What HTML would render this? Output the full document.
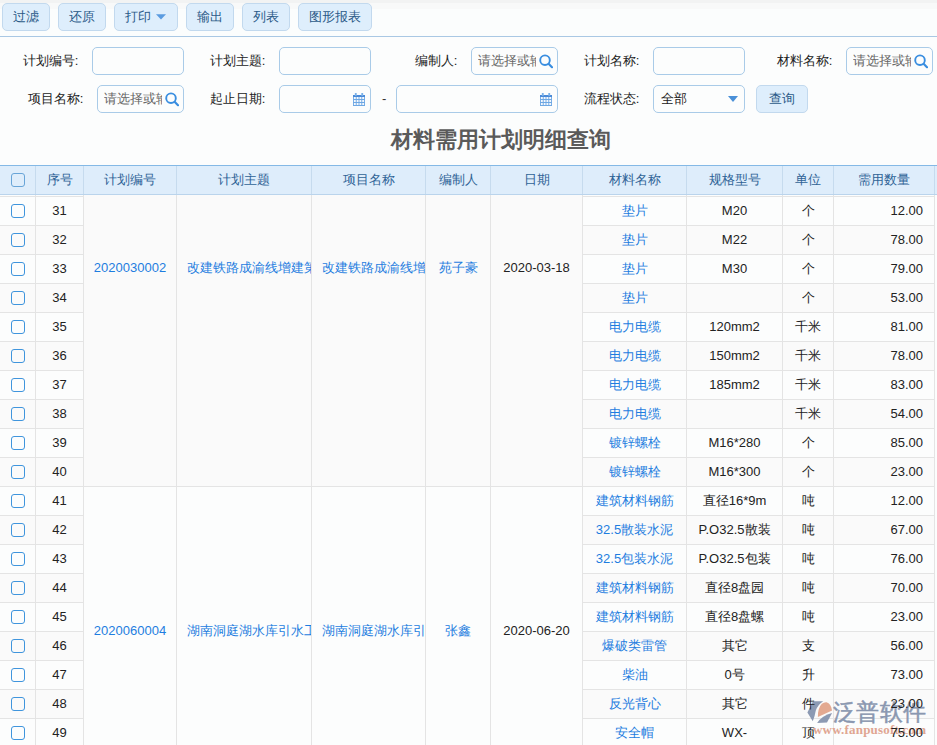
<!DOCTYPE html><html><head><meta charset="utf-8"><style>
*{box-sizing:border-box}
html,body{margin:0;padding:0;width:937px;height:745px;overflow:hidden;background:#fcfdfd;font-family:"Liberation Sans",sans-serif;font-size:13px;color:#333}
.a{position:absolute}
.btn{position:absolute;top:3px;height:28px;border:1px solid #c2d9ee;border-radius:5px;background:#deeefc;color:#2b5a88;line-height:25px;text-align:center;white-space:nowrap}
.lbl{position:absolute;text-align:right;white-space:nowrap;line-height:16px;color:#222}
.inp{position:absolute;height:28px;border:1px solid #a9cbe8;border-radius:5px;background:#fcfdfd;overflow:hidden}
.ph{position:absolute;left:6px;top:4px;line-height:17px;color:#666;white-space:nowrap;overflow:hidden}
.hc{position:absolute;top:166px;height:28px;line-height:28px;text-align:center;color:#2f6396;white-space:nowrap}
.vl{position:absolute;width:1px}
.hl{position:absolute;height:1px}
.c{position:absolute;height:28px;line-height:28px;white-space:nowrap;overflow:hidden}
.lk{color:#1e7de0}
.cb{position:absolute;left:11px;width:14px;height:14px;border:1.75px solid #3f95dd;border-radius:3px;background:transparent}
</style></head><body>

<div class="a" style="left:0;top:0;width:937px;height:36px;background:linear-gradient(#f2f3f3 0px,#f2f3f3 3px,#f8f9f9 3px,#f8f9f9 9px,#fbfdfd 9px,#fbfdfd 36px)"></div>
<div class="a" style="left:0;top:36px;width:937px;height:1px;background:#a9c8e4"></div>
<div class="btn" style="left:2px;width:48px">过滤</div>
<div class="btn" style="left:58px;width:48px">还原</div>
<div class="btn" style="left:114px;width:64px;text-align:left;padding-left:10px">打印<svg class="a" style="left:41px;top:10px" width="10" height="6" viewBox="0 0 10 6"><path d="M0 0.3H10L5 5.6Z" fill="#5a9be0"/></svg></div>
<div class="btn" style="left:186px;width:48px">输出</div>
<div class="btn" style="left:242px;width:48px">列表</div>
<div class="btn" style="left:298px;width:74px">图形报表</div>
<div class="lbl" style="left:-41.599999999999994px;width:120px;top:52.8px">计划编号:</div>
<div class="inp" style="left:92px;top:47px;width:92px"></div>
<div class="lbl" style="left:145.4px;width:120px;top:52.8px">计划主题:</div>
<div class="inp" style="left:279px;top:47px;width:92px"></div>
<div class="lbl" style="left:337.4px;width:120px;top:52.8px">编制人:</div>
<div class="inp" style="left:471px;top:47px;width:87px"><div class="ph" style="width:58px">请选择或输入</div><svg class="a" style="right:4px;top:6px" width="16" height="16" viewBox="0 0 16 16"><circle cx="8" cy="6.2" r="4.8" fill="none" stroke="#3a8ee0" stroke-width="1.9"/><path d="M11.6 9.8L15 13.2" stroke="#3a8ee0" stroke-width="2.2" stroke-linecap="round"/></svg></div>
<div class="lbl" style="left:519.4px;width:120px;top:52.8px">计划名称:</div>
<div class="inp" style="left:653px;top:47px;width:92px"></div>
<div class="lbl" style="left:712.4px;width:120px;top:52.8px">材料名称:</div>
<div class="inp" style="left:846px;top:47px;width:87px"><div class="ph" style="width:58px">请选择或输入</div><svg class="a" style="right:4px;top:6px" width="16" height="16" viewBox="0 0 16 16"><circle cx="8" cy="6.2" r="4.8" fill="none" stroke="#3a8ee0" stroke-width="1.9"/><path d="M11.6 9.8L15 13.2" stroke="#3a8ee0" stroke-width="2.2" stroke-linecap="round"/></svg></div>
<div class="lbl" style="left:-36.599999999999994px;width:120px;top:90.8px">项目名称:</div>
<div class="inp" style="left:97px;top:85px;width:87px"><div class="ph" style="width:58px">请选择或输入</div><svg class="a" style="right:4px;top:6px" width="16" height="16" viewBox="0 0 16 16"><circle cx="8" cy="6.2" r="4.8" fill="none" stroke="#3a8ee0" stroke-width="1.9"/><path d="M11.6 9.8L15 13.2" stroke="#3a8ee0" stroke-width="2.2" stroke-linecap="round"/></svg></div>
<div class="lbl" style="left:145.4px;width:120px;top:90.8px">起止日期:</div>
<div class="inp" style="left:279px;top:85px;width:92px"><svg class="a" style="right:5px;top:7px" width="12" height="13" viewBox="0 0 13 13" preserveAspectRatio="none"><rect x="0" y="4" width="13" height="9" fill="#6ea8e4"/><g fill="#f4f8fd"><rect x="1" y="4" width="2" height="2"/><rect x="4" y="4" width="2" height="2"/><rect x="7" y="4" width="2" height="2"/><rect x="10" y="4" width="2" height="2"/><rect x="1" y="7" width="2" height="2"/><rect x="4" y="7" width="2" height="2"/><rect x="7" y="7" width="2" height="2"/><rect x="10" y="7" width="2" height="2"/><rect x="1" y="10" width="2" height="2"/><rect x="4" y="10" width="2" height="2"/><rect x="7" y="10" width="2" height="2"/><rect x="10" y="10" width="2" height="2"/></g><rect x="0" y="2" width="13" height="2" fill="#4a8ad8"/><rect x="2" y="0" width="2" height="3" fill="#79b0e8"/><rect x="9" y="0" width="2" height="3" fill="#79b0e8"/></svg></div>
<div class="a" style="left:382px;top:91px;line-height:16px">-</div>
<div class="inp" style="left:396px;top:85px;width:162px"><svg class="a" style="right:5px;top:7px" width="12" height="13" viewBox="0 0 13 13" preserveAspectRatio="none"><rect x="0" y="4" width="13" height="9" fill="#6ea8e4"/><g fill="#f4f8fd"><rect x="1" y="4" width="2" height="2"/><rect x="4" y="4" width="2" height="2"/><rect x="7" y="4" width="2" height="2"/><rect x="10" y="4" width="2" height="2"/><rect x="1" y="7" width="2" height="2"/><rect x="4" y="7" width="2" height="2"/><rect x="7" y="7" width="2" height="2"/><rect x="10" y="7" width="2" height="2"/><rect x="1" y="10" width="2" height="2"/><rect x="4" y="10" width="2" height="2"/><rect x="7" y="10" width="2" height="2"/><rect x="10" y="10" width="2" height="2"/></g><rect x="0" y="2" width="13" height="2" fill="#4a8ad8"/><rect x="2" y="0" width="2" height="3" fill="#79b0e8"/><rect x="9" y="0" width="2" height="3" fill="#79b0e8"/></svg></div>
<div class="lbl" style="left:519.4px;width:120px;top:90.8px">流程状态:</div>
<div class="inp" style="left:653px;top:85px;width:92px"><div class="ph" style="color:#222;left:7px">全部</div><svg class="a" style="right:6px;top:10px" width="10" height="6" viewBox="0 0 10 6"><path d="M0 0H10L5 6Z" fill="#4a90d8"/></svg></div>
<div class="btn" style="left:756px;top:85px;width:52px">查询</div>
<div class="a" style="left:391px;top:127px;font-size:22px;font-weight:bold;color:#5a5a5a;line-height:26px;white-space:nowrap">材料需用计划明细查询</div>
<div class="a" style="left:0;top:165px;width:937px;height:30px;background:#deedfb"></div>
<div class="hl" style="left:0;top:165px;width:937px;background:#84b9e6"></div>
<div class="hl" style="left:0;top:194px;width:937px;background:#bad4ec"></div>
<div class="vl" style="left:35px;top:166px;height:28px;background:#c6dbee"></div>
<div class="vl" style="left:83px;top:166px;height:28px;background:#c6dbee"></div>
<div class="vl" style="left:176px;top:166px;height:28px;background:#c6dbee"></div>
<div class="vl" style="left:311px;top:166px;height:28px;background:#c6dbee"></div>
<div class="vl" style="left:425px;top:166px;height:28px;background:#c6dbee"></div>
<div class="vl" style="left:490px;top:166px;height:28px;background:#c6dbee"></div>
<div class="vl" style="left:582px;top:166px;height:28px;background:#c6dbee"></div>
<div class="vl" style="left:686px;top:166px;height:28px;background:#c6dbee"></div>
<div class="vl" style="left:782px;top:166px;height:28px;background:#c6dbee"></div>
<div class="vl" style="left:833px;top:166px;height:28px;background:#c6dbee"></div>
<div class="vl" style="left:934px;top:166px;height:28px;background:#c6dbee"></div>
<div class="cb" style="top:173px;border-color:#68a5d8"></div>
<div class="hc" style="left:36px;width:47px">序号</div>
<div class="hc" style="left:84px;width:92px">计划编号</div>
<div class="hc" style="left:177px;width:134px">计划主题</div>
<div class="hc" style="left:312px;width:113px">项目名称</div>
<div class="hc" style="left:426px;width:64px">编制人</div>
<div class="hc" style="left:491px;width:91px">日期</div>
<div class="hc" style="left:583px;width:103px">材料名称</div>
<div class="hc" style="left:687px;width:95px">规格型号</div>
<div class="hc" style="left:783px;width:50px">单位</div>
<div class="hc" style="left:834px;width:100px">需用数量</div>
<div class="a" style="left:0;top:225px;width:83px;height:29px;background:#fafafa"></div>
<div class="a" style="left:582px;top:225px;width:352px;height:29px;background:#fafafa"></div>
<div class="a" style="left:0;top:283px;width:83px;height:29px;background:#fafafa"></div>
<div class="a" style="left:582px;top:283px;width:352px;height:29px;background:#fafafa"></div>
<div class="a" style="left:0;top:341px;width:83px;height:29px;background:#fafafa"></div>
<div class="a" style="left:582px;top:341px;width:352px;height:29px;background:#fafafa"></div>
<div class="a" style="left:0;top:399px;width:83px;height:29px;background:#fafafa"></div>
<div class="a" style="left:582px;top:399px;width:352px;height:29px;background:#fafafa"></div>
<div class="a" style="left:0;top:457px;width:83px;height:29px;background:#fafafa"></div>
<div class="a" style="left:582px;top:457px;width:352px;height:29px;background:#fafafa"></div>
<div class="a" style="left:0;top:515px;width:83px;height:29px;background:#fafafa"></div>
<div class="a" style="left:582px;top:515px;width:352px;height:29px;background:#fafafa"></div>
<div class="a" style="left:0;top:573px;width:83px;height:29px;background:#fafafa"></div>
<div class="a" style="left:582px;top:573px;width:352px;height:29px;background:#fafafa"></div>
<div class="a" style="left:0;top:631px;width:83px;height:29px;background:#fafafa"></div>
<div class="a" style="left:582px;top:631px;width:352px;height:29px;background:#fafafa"></div>
<div class="a" style="left:0;top:689px;width:83px;height:29px;background:#fafafa"></div>
<div class="a" style="left:582px;top:689px;width:352px;height:29px;background:#fafafa"></div>
<div class="a" style="left:83px;top:195px;width:499px;height:291px;background:#fafafa"></div>
<div class="hl" style="left:0;top:196px;width:83px;background:#e4e4e4"></div>
<div class="hl" style="left:582px;top:196px;width:352px;background:#e4e4e4"></div>
<div class="hl" style="left:0;top:225px;width:83px;background:#e4e4e4"></div>
<div class="hl" style="left:582px;top:225px;width:352px;background:#e4e4e4"></div>
<div class="hl" style="left:0;top:254px;width:83px;background:#e4e4e4"></div>
<div class="hl" style="left:582px;top:254px;width:352px;background:#e4e4e4"></div>
<div class="hl" style="left:0;top:283px;width:83px;background:#e4e4e4"></div>
<div class="hl" style="left:582px;top:283px;width:352px;background:#e4e4e4"></div>
<div class="hl" style="left:0;top:312px;width:83px;background:#e4e4e4"></div>
<div class="hl" style="left:582px;top:312px;width:352px;background:#e4e4e4"></div>
<div class="hl" style="left:0;top:341px;width:83px;background:#e4e4e4"></div>
<div class="hl" style="left:582px;top:341px;width:352px;background:#e4e4e4"></div>
<div class="hl" style="left:0;top:370px;width:83px;background:#e4e4e4"></div>
<div class="hl" style="left:582px;top:370px;width:352px;background:#e4e4e4"></div>
<div class="hl" style="left:0;top:399px;width:83px;background:#e4e4e4"></div>
<div class="hl" style="left:582px;top:399px;width:352px;background:#e4e4e4"></div>
<div class="hl" style="left:0;top:428px;width:83px;background:#e4e4e4"></div>
<div class="hl" style="left:582px;top:428px;width:352px;background:#e4e4e4"></div>
<div class="hl" style="left:0;top:457px;width:83px;background:#e4e4e4"></div>
<div class="hl" style="left:582px;top:457px;width:352px;background:#e4e4e4"></div>
<div class="hl" style="left:0;top:486px;width:83px;background:#e4e4e4"></div>
<div class="hl" style="left:582px;top:486px;width:352px;background:#e4e4e4"></div>
<div class="hl" style="left:83px;top:486px;width:499px;background:#e4e4e4"></div>
<div class="hl" style="left:0;top:515px;width:83px;background:#e4e4e4"></div>
<div class="hl" style="left:582px;top:515px;width:352px;background:#e4e4e4"></div>
<div class="hl" style="left:0;top:544px;width:83px;background:#e4e4e4"></div>
<div class="hl" style="left:582px;top:544px;width:352px;background:#e4e4e4"></div>
<div class="hl" style="left:0;top:573px;width:83px;background:#e4e4e4"></div>
<div class="hl" style="left:582px;top:573px;width:352px;background:#e4e4e4"></div>
<div class="hl" style="left:0;top:602px;width:83px;background:#e4e4e4"></div>
<div class="hl" style="left:582px;top:602px;width:352px;background:#e4e4e4"></div>
<div class="hl" style="left:0;top:631px;width:83px;background:#e4e4e4"></div>
<div class="hl" style="left:582px;top:631px;width:352px;background:#e4e4e4"></div>
<div class="hl" style="left:0;top:660px;width:83px;background:#e4e4e4"></div>
<div class="hl" style="left:582px;top:660px;width:352px;background:#e4e4e4"></div>
<div class="hl" style="left:0;top:689px;width:83px;background:#e4e4e4"></div>
<div class="hl" style="left:582px;top:689px;width:352px;background:#e4e4e4"></div>
<div class="hl" style="left:0;top:718px;width:83px;background:#e4e4e4"></div>
<div class="hl" style="left:582px;top:718px;width:352px;background:#e4e4e4"></div>
<div class="vl" style="left:35px;top:195px;height:550px;background:#e4e4e4"></div>
<div class="vl" style="left:83px;top:195px;height:550px;background:#e4e4e4"></div>
<div class="vl" style="left:176px;top:195px;height:550px;background:#e4e4e4"></div>
<div class="vl" style="left:311px;top:195px;height:550px;background:#e4e4e4"></div>
<div class="vl" style="left:425px;top:195px;height:550px;background:#e4e4e4"></div>
<div class="vl" style="left:490px;top:195px;height:550px;background:#e4e4e4"></div>
<div class="vl" style="left:582px;top:195px;height:550px;background:#e4e4e4"></div>
<div class="vl" style="left:686px;top:195px;height:550px;background:#e4e4e4"></div>
<div class="vl" style="left:782px;top:195px;height:550px;background:#e4e4e4"></div>
<div class="vl" style="left:833px;top:195px;height:550px;background:#e4e4e4"></div>
<div class="vl" style="left:934px;top:195px;height:550px;background:#e4e4e4"></div>
<svg class="a" style="left:800px;top:692px;opacity:0.95" width="45" height="38" viewBox="0 0 45 38">
<path d="M13 9.2 L23.2 9.2 Q18 12.5 15.8 18.4 Q14.8 24 12.8 29.3 L7.4 20.4 Z" fill="#8795b0"/>
<path d="M17.9 25 Q17.6 16 21.9 11.7 Q24 10 26.5 10.2 Q31 11.5 32.1 18.4 Z" fill="#e2a58c"/>
<path d="M17.1 30.9 Q22 23.5 32.1 20.9 L27 30.6 Z" fill="#8795b0"/>
</svg>
<div class="a" style="left:833px;top:698px;font-size:23px;line-height:28px;color:#8a97b0;white-space:nowrap;-webkit-text-stroke:0.5px #8a97b0;letter-spacing:0.4px">泛普软件</div>
<div class="a" style="left:813px;top:722px;font-family:'Liberation Serif',serif;font-size:13px;font-weight:bold;line-height:15px;color:#e0a692;white-space:nowrap;letter-spacing:0.2px">www.fanpusoft.com</div>
<div class="cb" style="top:204px"></div>
<div class="c" style="left:36px;width:47px;top:197px;text-align:center;color:#222">31</div>
<div class="c lk" style="left:583px;width:103px;top:197px;text-align:center">垫片</div>
<div class="c" style="left:687px;width:95px;top:197px;text-align:center;color:#222">M20</div>
<div class="c" style="left:783px;width:50px;top:197px;text-align:center;color:#222">个</div>
<div class="c" style="left:834px;width:100px;top:197px;text-align:right;padding-right:11px;color:#222">12.00</div>
<div class="cb" style="top:233px"></div>
<div class="c" style="left:36px;width:47px;top:226px;text-align:center;color:#222">32</div>
<div class="c lk" style="left:583px;width:103px;top:226px;text-align:center">垫片</div>
<div class="c" style="left:687px;width:95px;top:226px;text-align:center;color:#222">M22</div>
<div class="c" style="left:783px;width:50px;top:226px;text-align:center;color:#222">个</div>
<div class="c" style="left:834px;width:100px;top:226px;text-align:right;padding-right:11px;color:#222">78.00</div>
<div class="cb" style="top:262px"></div>
<div class="c" style="left:36px;width:47px;top:255px;text-align:center;color:#222">33</div>
<div class="c lk" style="left:583px;width:103px;top:255px;text-align:center">垫片</div>
<div class="c" style="left:687px;width:95px;top:255px;text-align:center;color:#222">M30</div>
<div class="c" style="left:783px;width:50px;top:255px;text-align:center;color:#222">个</div>
<div class="c" style="left:834px;width:100px;top:255px;text-align:right;padding-right:11px;color:#222">79.00</div>
<div class="cb" style="top:291px"></div>
<div class="c" style="left:36px;width:47px;top:284px;text-align:center;color:#222">34</div>
<div class="c lk" style="left:583px;width:103px;top:284px;text-align:center">垫片</div>
<div class="c" style="left:687px;width:95px;top:284px;text-align:center;color:#222"></div>
<div class="c" style="left:783px;width:50px;top:284px;text-align:center;color:#222">个</div>
<div class="c" style="left:834px;width:100px;top:284px;text-align:right;padding-right:11px;color:#222">53.00</div>
<div class="cb" style="top:320px"></div>
<div class="c" style="left:36px;width:47px;top:313px;text-align:center;color:#222">35</div>
<div class="c lk" style="left:583px;width:103px;top:313px;text-align:center">电力电缆</div>
<div class="c" style="left:687px;width:95px;top:313px;text-align:center;color:#222">120mm2</div>
<div class="c" style="left:783px;width:50px;top:313px;text-align:center;color:#222">千米</div>
<div class="c" style="left:834px;width:100px;top:313px;text-align:right;padding-right:11px;color:#222">81.00</div>
<div class="cb" style="top:349px"></div>
<div class="c" style="left:36px;width:47px;top:342px;text-align:center;color:#222">36</div>
<div class="c lk" style="left:583px;width:103px;top:342px;text-align:center">电力电缆</div>
<div class="c" style="left:687px;width:95px;top:342px;text-align:center;color:#222">150mm2</div>
<div class="c" style="left:783px;width:50px;top:342px;text-align:center;color:#222">千米</div>
<div class="c" style="left:834px;width:100px;top:342px;text-align:right;padding-right:11px;color:#222">78.00</div>
<div class="cb" style="top:378px"></div>
<div class="c" style="left:36px;width:47px;top:371px;text-align:center;color:#222">37</div>
<div class="c lk" style="left:583px;width:103px;top:371px;text-align:center">电力电缆</div>
<div class="c" style="left:687px;width:95px;top:371px;text-align:center;color:#222">185mm2</div>
<div class="c" style="left:783px;width:50px;top:371px;text-align:center;color:#222">千米</div>
<div class="c" style="left:834px;width:100px;top:371px;text-align:right;padding-right:11px;color:#222">83.00</div>
<div class="cb" style="top:407px"></div>
<div class="c" style="left:36px;width:47px;top:400px;text-align:center;color:#222">38</div>
<div class="c lk" style="left:583px;width:103px;top:400px;text-align:center">电力电缆</div>
<div class="c" style="left:687px;width:95px;top:400px;text-align:center;color:#222"></div>
<div class="c" style="left:783px;width:50px;top:400px;text-align:center;color:#222">千米</div>
<div class="c" style="left:834px;width:100px;top:400px;text-align:right;padding-right:11px;color:#222">54.00</div>
<div class="cb" style="top:436px"></div>
<div class="c" style="left:36px;width:47px;top:429px;text-align:center;color:#222">39</div>
<div class="c lk" style="left:583px;width:103px;top:429px;text-align:center">镀锌螺栓</div>
<div class="c" style="left:687px;width:95px;top:429px;text-align:center;color:#222">M16*280</div>
<div class="c" style="left:783px;width:50px;top:429px;text-align:center;color:#222">个</div>
<div class="c" style="left:834px;width:100px;top:429px;text-align:right;padding-right:11px;color:#222">85.00</div>
<div class="cb" style="top:465px"></div>
<div class="c" style="left:36px;width:47px;top:458px;text-align:center;color:#222">40</div>
<div class="c lk" style="left:583px;width:103px;top:458px;text-align:center">镀锌螺栓</div>
<div class="c" style="left:687px;width:95px;top:458px;text-align:center;color:#222">M16*300</div>
<div class="c" style="left:783px;width:50px;top:458px;text-align:center;color:#222">个</div>
<div class="c" style="left:834px;width:100px;top:458px;text-align:right;padding-right:11px;color:#222">23.00</div>
<div class="cb" style="top:494px"></div>
<div class="c" style="left:36px;width:47px;top:487px;text-align:center;color:#222">41</div>
<div class="c lk" style="left:583px;width:103px;top:487px;text-align:center">建筑材料钢筋</div>
<div class="c" style="left:687px;width:95px;top:487px;text-align:center;color:#222">直径16*9m</div>
<div class="c" style="left:783px;width:50px;top:487px;text-align:center;color:#222">吨</div>
<div class="c" style="left:834px;width:100px;top:487px;text-align:right;padding-right:11px;color:#222">12.00</div>
<div class="cb" style="top:523px"></div>
<div class="c" style="left:36px;width:47px;top:516px;text-align:center;color:#222">42</div>
<div class="c lk" style="left:583px;width:103px;top:516px;text-align:center">32.5散装水泥</div>
<div class="c" style="left:687px;width:95px;top:516px;text-align:center;color:#222">P.O32.5散装</div>
<div class="c" style="left:783px;width:50px;top:516px;text-align:center;color:#222">吨</div>
<div class="c" style="left:834px;width:100px;top:516px;text-align:right;padding-right:11px;color:#222">67.00</div>
<div class="cb" style="top:552px"></div>
<div class="c" style="left:36px;width:47px;top:545px;text-align:center;color:#222">43</div>
<div class="c lk" style="left:583px;width:103px;top:545px;text-align:center">32.5包装水泥</div>
<div class="c" style="left:687px;width:95px;top:545px;text-align:center;color:#222">P.O32.5包装</div>
<div class="c" style="left:783px;width:50px;top:545px;text-align:center;color:#222">吨</div>
<div class="c" style="left:834px;width:100px;top:545px;text-align:right;padding-right:11px;color:#222">76.00</div>
<div class="cb" style="top:581px"></div>
<div class="c" style="left:36px;width:47px;top:574px;text-align:center;color:#222">44</div>
<div class="c lk" style="left:583px;width:103px;top:574px;text-align:center">建筑材料钢筋</div>
<div class="c" style="left:687px;width:95px;top:574px;text-align:center;color:#222">直径8盘园</div>
<div class="c" style="left:783px;width:50px;top:574px;text-align:center;color:#222">吨</div>
<div class="c" style="left:834px;width:100px;top:574px;text-align:right;padding-right:11px;color:#222">70.00</div>
<div class="cb" style="top:610px"></div>
<div class="c" style="left:36px;width:47px;top:603px;text-align:center;color:#222">45</div>
<div class="c lk" style="left:583px;width:103px;top:603px;text-align:center">建筑材料钢筋</div>
<div class="c" style="left:687px;width:95px;top:603px;text-align:center;color:#222">直径8盘螺</div>
<div class="c" style="left:783px;width:50px;top:603px;text-align:center;color:#222">吨</div>
<div class="c" style="left:834px;width:100px;top:603px;text-align:right;padding-right:11px;color:#222">23.00</div>
<div class="cb" style="top:639px"></div>
<div class="c" style="left:36px;width:47px;top:632px;text-align:center;color:#222">46</div>
<div class="c lk" style="left:583px;width:103px;top:632px;text-align:center">爆破类雷管</div>
<div class="c" style="left:687px;width:95px;top:632px;text-align:center;color:#222">其它</div>
<div class="c" style="left:783px;width:50px;top:632px;text-align:center;color:#222">支</div>
<div class="c" style="left:834px;width:100px;top:632px;text-align:right;padding-right:11px;color:#222">56.00</div>
<div class="cb" style="top:668px"></div>
<div class="c" style="left:36px;width:47px;top:661px;text-align:center;color:#222">47</div>
<div class="c lk" style="left:583px;width:103px;top:661px;text-align:center">柴油</div>
<div class="c" style="left:687px;width:95px;top:661px;text-align:center;color:#222">0号</div>
<div class="c" style="left:783px;width:50px;top:661px;text-align:center;color:#222">升</div>
<div class="c" style="left:834px;width:100px;top:661px;text-align:right;padding-right:11px;color:#222">73.00</div>
<div class="cb" style="top:697px"></div>
<div class="c" style="left:36px;width:47px;top:690px;text-align:center;color:#222">48</div>
<div class="c lk" style="left:583px;width:103px;top:690px;text-align:center">反光背心</div>
<div class="c" style="left:687px;width:95px;top:690px;text-align:center;color:#222">其它</div>
<div class="c" style="left:783px;width:50px;top:690px;text-align:center;color:#222">件</div>
<div class="c" style="left:834px;width:100px;top:690px;text-align:right;padding-right:11px;color:#222">23.00</div>
<div class="cb" style="top:726px"></div>
<div class="c" style="left:36px;width:47px;top:719px;text-align:center;color:#222">49</div>
<div class="c lk" style="left:583px;width:103px;top:719px;text-align:center">安全帽</div>
<div class="c" style="left:687px;width:95px;top:719px;text-align:center;color:#222">WX-</div>
<div class="c" style="left:783px;width:50px;top:719px;text-align:center;color:#222">顶</div>
<div class="c" style="left:834px;width:100px;top:719px;text-align:right;padding-right:11px;color:#222">75.00</div>
<div class="c lk" style="left:84px;width:92px;top:254px;text-align:center">2020030002</div>
<div class="c lk" style="left:177px;width:134px;top:254px;padding-left:10px">改建铁路成渝线增建第二线</div>
<div class="c lk" style="left:312px;width:113px;top:254px;padding-left:10px">改建铁路成渝线增建第二线</div>
<div class="c lk" style="left:426px;width:64px;top:254px;text-align:center">苑子豪</div>
<div class="c" style="left:491px;width:91px;top:254px;text-align:center;color:#222">2020-03-18</div>
<div class="c lk" style="left:84px;width:92px;top:617px;text-align:center">2020060004</div>
<div class="c lk" style="left:177px;width:134px;top:617px;padding-left:10px">湖南洞庭湖水库引水工程</div>
<div class="c lk" style="left:312px;width:113px;top:617px;padding-left:10px">湖南洞庭湖水库引水工程</div>
<div class="c lk" style="left:426px;width:64px;top:617px;text-align:center">张鑫</div>
<div class="c" style="left:491px;width:91px;top:617px;text-align:center;color:#222">2020-06-20</div>
</body></html>
